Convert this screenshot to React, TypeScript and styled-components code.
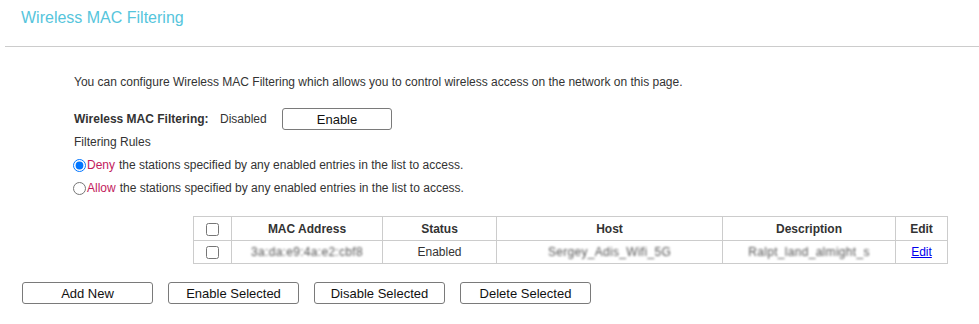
import React from 'react';
import styled, { createGlobalStyle } from 'styled-components';

const Global = createGlobalStyle`
  body {
    margin: 0;
    background: #ffffff;
    font-family: Arial, "Liberation Sans", Helvetica, sans-serif;
    color: #333333;
    font-size: 12px;
  }
`;

const Page = styled.div`
  width: 979px;
  height: 324px;
  overflow: hidden;
`;

const TitleBar = styled.div`
  height: 47px;
  display: flex;
  align-items: center;
  border-bottom: 1px solid #cccccc;
  margin-left: 5px;
  padding-left: 16px;
  box-sizing: border-box;
  padding-bottom: 10px;
`;

const Title = styled.h1`
  margin: 0;
  font-size: 16px;
  font-weight: normal;
  color: #56c5dc;
`;

const Content = styled.div`
  padding-left: 74px;
`;

const Intro = styled.p`
  margin: 27px 0 0;
  line-height: 16px;
`;

const StatusRow = styled.div`
  display: flex;
  align-items: center;
  margin-top: 18px;
  height: 22px;
`;

const Label = styled.span`
  font-weight: bold;
  width: 146px;
`;

const StatusText = styled.span`
  width: 62px;
`;

const Button = styled.button<{ $w?: number }>`
  width: ${p => p.$w || 131}px;
  height: 22px;
  padding: 0;
  background: #ffffff;
  border: 1px solid #7a7a7a;
  border-radius: 3px;
  font-family: Arial, "Liberation Sans", sans-serif;
  font-size: 13px;
  color: #111111;
  box-sizing: border-box;
`;

const Line = styled.div<{ $top: number }>`
  margin-top: ${p => p.$top}px;
  height: 16px;
  line-height: 16px;
  display: flex;
  align-items: center;
`;

const Radio = styled.input`
  margin: 0 1px 0 -1px;
  width: 13px;
  height: 13px;
`;

const Keyword = styled.span`
  color: #c21a5c;
  margin-right: 4px;
`;

const Table = styled.table`
  margin: 20px 0 0 193px;
  width: 754px;
  table-layout: fixed;
  border-collapse: collapse;
  text-align: center;
  line-height: 14px;
`;

const Th = styled.th<{ $w: number }>`
  width: ${p => p.$w}px;
  height: 24px;
  padding: 0;
  border: 1px solid #cccccc;
  font-weight: bold;
  color: #333333;
  box-sizing: border-box;
`;

const Td = styled.td`
  height: 23px;
  padding: 0;
  border: 1px solid #cccccc;
  box-sizing: border-box;
`;

const Blurred = styled.span`
  display: inline-block;
  color: #555555;
  filter: blur(1.2px);
  letter-spacing: 0.3px;
`;

const Box = styled.input`
  margin: 0;
  width: 13px;
  height: 13px;
  vertical-align: middle;
  display: inline-block;
`;

const EditLink = styled.a`
  color: #0000ee;
  text-decoration: underline;
`;

const Actions = styled.div`
  display: flex;
  gap: 15px;
  margin: 18px 0 0 22px;
`;

export default function App() {
  return (
    <Page>
      <Global />
      <TitleBar>
        <Title>Wireless MAC Filtering</Title>
      </TitleBar>
      <Content>
        <Intro>
          You can configure Wireless MAC Filtering which allows you to control wireless access on the network on this page.
        </Intro>
        <StatusRow>
          <Label>Wireless MAC Filtering:</Label>
          <StatusText>Disabled</StatusText>
          <Button $w={110}>Enable</Button>
        </StatusRow>
        <Line $top={4}>Filtering Rules</Line>
        <Line $top={7}>
          <Radio type="radio" name="rule" defaultChecked />
          <Keyword>Deny</Keyword>the stations specified by any enabled entries in the list to access.
        </Line>
        <Line $top={7}>
          <Radio type="radio" name="rule" />
          <Keyword>Allow</Keyword>the stations specified by any enabled entries in the list to access.
        </Line>
      </Content>
      <Table>
        <thead>
          <tr>
            <Th $w={38}><Box type="checkbox" /></Th>
            <Th $w={151}>MAC Address</Th>
            <Th $w={114}>Status</Th>
            <Th $w={226}>Host</Th>
            <Th $w={173}>Description</Th>
            <Th $w={52}>Edit</Th>
          </tr>
        </thead>
        <tbody>
          <tr>
            <Td><Box type="checkbox" /></Td>
            <Td><Blurred>3a:da:e9:4a:e2:cbf8</Blurred></Td>
            <Td>Enabled</Td>
            <Td><Blurred>Sergey_Adis_Wifi_5G</Blurred></Td>
            <Td><Blurred>Ralpt_land_almight_s</Blurred></Td>
            <Td><EditLink href="#">Edit</EditLink></Td>
          </tr>
        </tbody>
      </Table>
      <Actions>
        <Button>Add New</Button>
        <Button>Enable Selected</Button>
        <Button>Disable Selected</Button>
        <Button>Delete Selected</Button>
      </Actions>
    </Page>
  );
}
